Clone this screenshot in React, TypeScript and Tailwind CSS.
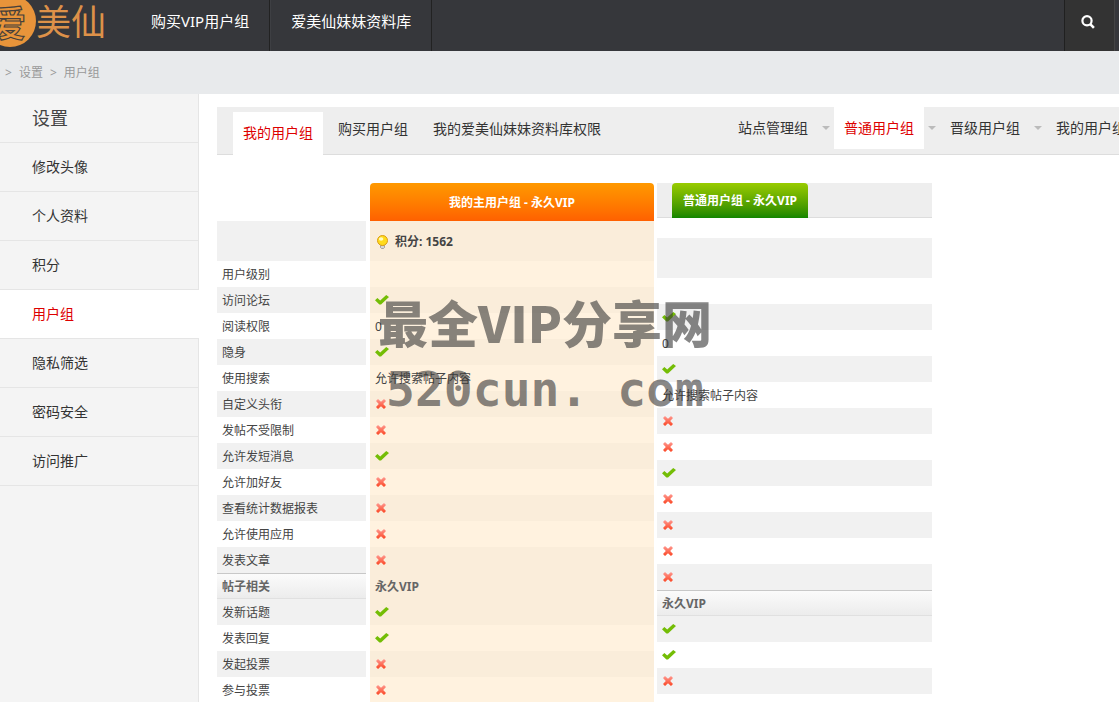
import React from "react";

type Mark = "yes" | "no" | string;

const navItems = ["购买VIP用户组", "爱美仙妹妹资料库"];
const sideItems = ["修改头像", "个人资料", "积分", "用户组", "隐私筛选", "密码安全", "访问推广"];
const groupTabs = ["站点管理组", "普通用户组", "晋级用户组", "我的用户组"];

const rows: { label: string; value: Mark; section?: boolean }[] = [
  { label: "用户级别", value: "" },
  { label: "访问论坛", value: "yes" },
  { label: "阅读权限", value: "0" },
  { label: "隐身", value: "yes" },
  { label: "使用搜索", value: "允许搜索帖子内容" },
  { label: "自定义头衔", value: "no" },
  { label: "发帖不受限制", value: "no" },
  { label: "允许发短消息", value: "yes" },
  { label: "允许加好友", value: "no" },
  { label: "查看统计数据报表", value: "no" },
  { label: "允许使用应用", value: "no" },
  { label: "发表文章", value: "no" },
  { label: "帖子相关", value: "永久VIP", section: true },
  { label: "发新话题", value: "yes" },
  { label: "发表回复", value: "yes" },
  { label: "发起投票", value: "no" },
  { label: "参与投票", value: "no" },
];

function Check() {
  return (
    <svg role="img" aria-label="允许" className="block" width="14" height="10" viewBox="0 0 14 10">
      <path d="M0 5.2 2.4 3 5.2 5.4 11.2 0 14 2 6 9.6H4.4Z" fill="#74bd06" />
    </svg>
  );
}

function Cross() {
  return (
    <svg role="img" aria-label="不允许" className="ml-px block" width="10" height="10" viewBox="0 0 10 10">
      <defs>
        <linearGradient id="crossFill" x1="0" y1="0" x2="0" y2="10" gradientUnits="userSpaceOnUse">
          <stop offset="0" stopColor="#ff9a92" />
          <stop offset="1" stopColor="#fb4522" />
        </linearGradient>
      </defs>
      <path d="M2 0 5 2.8 8 0 10 2 7.2 5 10 8 8 10 5 7.2 2 10 0 8 2.8 5 0 2Z" fill="url(#crossFill)" />
    </svg>
  );
}

function Value({ value }: { value: Mark }) {
  if (value === "yes") return <Check />;
  if (value === "no") return <Cross />;
  return <>{value}</>;
}

function Bulb() {
  return (
    <svg aria-hidden="true" width="13" height="14" viewBox="0 0 13 14">
      <path d="M4.5 10.5h4v2l-1 1h-2l-1-1Z" fill="#d6d6d6" stroke="#888" strokeWidth=".7" />
      <circle cx="6.5" cy="5.5" r="5" fill="#ffdb1c" stroke="#dc9d12" />
      <ellipse cx="5.1" cy="4" rx="2.2" ry="1.8" fill="#fffbc4" />
    </svg>
  );
}

const sectionRow = "border-t border-b border-t-[#c8c8c8] border-b-[#e0e0e0] bg-linear-to-b from-[#fbfbfb] to-[#ececec] font-bold text-[#666]";

export default function App() {
  return (
    <div className="relative flex h-screen flex-col overflow-x-hidden overflow-y-auto bg-white font-['Noto_Sans','Noto_Sans_CJK_SC',sans-serif] text-[#333] [scrollbar-width:none]">
      <header className="flex h-[51px] shrink-0 bg-[#36373b]">
        <a href="#home" aria-label="爱美仙" className="block w-[131px] shrink-0 overflow-hidden">
          <svg width="110" height="51" viewBox="0 0 110 51" className="font-['Noto_Sans_CJK_SC',sans-serif]">
            <circle cx="10" cy="21" r="26" fill="#e8943a" />
            <text x="-10" y="37" fontSize="36" fontWeight="700" fill="#e8943a" stroke="#46403b" strokeWidth="1.2">爱</text>
            <text x="36" y="35" fontSize="35" fontWeight="400" fill="#dd9149">美仙</text>
          </svg>
        </a>
        <nav className="flex grow">
          {navItems.map((item) => (
            <a
              key={item}
              href="#nav"
              className="border-r border-r-[#222] px-5 pt-[9px] text-[15px] leading-6 whitespace-nowrap text-white last:border-l last:border-l-[#3e3f43]"
            >
              {item}
            </a>
          ))}
        </nav>
        <button type="button" aria-label="搜索" className="mr-1 flex w-[51px] justify-center border-r border-l border-r-[#444] border-l-[#202020] bg-[#333] pt-[15px] pr-1">
          <svg width="14" height="14" viewBox="0 0 14 14" fill="none" stroke="#fff">
            <circle cx="6" cy="5.8" r="4.6" strokeWidth="2.2" />
            <path d="m9.3 9.2 3.6 3.6" strokeWidth="2.6" />
          </svg>
        </button>
      </header>

      <nav aria-label="路径" className="flex h-[43px] shrink-0 items-center gap-[7px] bg-[#e8eaec] pl-[5px] text-xs text-[#999]">
        <span>&gt;</span>
        <a href="#settings">设置</a>
        <span>&gt;</span>
        <a href="#groups">用户组</a>
      </nav>

      <div className="flex grow">
        <aside className="w-[199px] shrink-0 border-r border-[#e5e5e5] bg-[#f4f4f4]">
          <h2 className="h-[49px] border-b border-[#e5e5e5] pl-8 text-lg leading-[48px] text-[#444]">设置</h2>
          <ul>
            {sideItems.map((item) => (
              <li key={item}>
                <a
                  href="#side"
                  className={
                    item === "用户组"
                      ? "-mr-px block h-[49px] border-b border-[#e5e5e5] bg-white pl-8 text-sm leading-[48px] text-[#d00]"
                      : "block h-[49px] border-b border-[#e5e5e5] pl-8 text-sm leading-[48px]"
                  }
                >
                  {item}
                </a>
              </li>
            ))}
          </ul>
        </aside>

        <main className="min-w-0 grow overflow-x-clip pt-[13px] pl-[18px]">
          <div className="flex h-12 justify-between border-b border-[#ddd] bg-[#eee] text-sm whitespace-nowrap">
            <ul className="flex pl-4">
              <li className="-mb-px pt-[5px]">
                <a href="#mine" className="block h-[43px] bg-white px-2.5 leading-[42px] text-[#d00]">我的用户组</a>
              </li>
              <li><a href="#buy" className="block pr-2.5 pl-[15px] leading-[44px]">购买用户组</a></li>
              <li><a href="#rights" className="block px-[15px] leading-[44px]">我的爱美仙妹妹资料库权限</a></li>
            </ul>
            <ul className="-mr-[17px] flex">
              {groupTabs.map((tab, i) => (
                <li key={tab} className="flex">
                  <a
                    href="#group"
                    className={i === 1 ? "block h-[42px] bg-white px-2.5 leading-[42px] text-[#d00]" : "block h-[42px] px-2.5 leading-[42px]"}
                  >
                    {tab}
                  </a>
                  {i < 3 && (
                    <svg aria-hidden="true" className="mt-[19px] mr-1 ml-1" width="8" height="4" viewBox="0 0 8 4">
                      <path d="M0 0h8L4 4Z" fill="#bbb" />
                    </svg>
                  )}
                </li>
              ))}
            </ul>
          </div>

          <div className="flex items-start pt-7 text-xs text-[#444]">
            <table className="mt-[38px] w-[149px] table-fixed border-separate border-spacing-0 text-left">
              <tbody>
                <tr className="h-10 bg-[#f1f1f1]"><td /></tr>
                {rows.map((r, i) => (
                  <tr key={r.label} className={i % 2 ? "h-[26px] bg-[#f1f1f1]" : "h-[26px]"}>
                    <th scope="row" className={r.section ? `${sectionRow} p-0 pt-0.5 pl-[5px]` : "p-0 pt-0.5 pl-[5px] font-normal"}>{r.label}</th>
                  </tr>
                ))}
              </tbody>
            </table>

            <table className="ml-1 w-[284px] table-fixed border-separate border-spacing-0 text-left">
              <thead>
                <tr className="h-[38px]">
                  <th className="rounded-t bg-linear-to-b from-[#ff9900] to-[#ff6000] p-0 pt-0.5 text-center font-bold text-white">我的主用户组 - 永久VIP</th>
                </tr>
              </thead>
              <tbody>
                <tr className="h-10 bg-[#faedda]">
                  <td className="p-0 pt-0.5 pl-1.5">
                    <div className="flex items-center gap-1.5 font-bold"><Bulb />积分: 1562</div>
                  </td>
                </tr>
                {rows.map((r, i) => (
                  <tr key={r.label} className={i % 2 || r.section ? "h-[26px] bg-[#faedda]" : "h-[26px] bg-[#fff2df]"}>
                    <td className={r.section ? "p-0 pt-0.5 pl-[5px] font-bold text-[#666]" : r.value.length > 3 || r.value === "0" ? "p-0 pt-0.5 pl-[5px]" : "p-0 pl-[5px]"}><Value value={r.value} /></td>
                  </tr>
                ))}
              </tbody>
            </table>

            <section className="ml-[3px] w-[275px]">
              <h3 className="flex h-[35px] border-b border-[#ddd] bg-[#eee] pl-[15px]">
                <span className="-mb-px h-[35px] rounded-t bg-linear-to-b from-[#9c0] to-[#108600] px-[11px] leading-[35px] font-bold text-white">普通用户组 - 永久VIP</span>
              </h3>
              <table className="mt-5 w-full table-fixed border-separate border-spacing-0 text-left">
                <tbody>
                  <tr className="h-10 bg-[#f1f1f1]"><td /></tr>
                  {rows.map((r, i) => (
                    <tr key={r.label} className={i % 2 ? "h-[26px] bg-[#f1f1f1]" : "h-[26px]"}>
                      <td className={r.section ? `${sectionRow} p-0 pt-0.5 pl-[5px]` : r.value.length > 3 || r.value === "0" ? "p-0 pt-0.5 pl-[5px]" : "p-0 pl-[5px]"}><Value value={r.value} /></td>
                    </tr>
                  ))}
                </tbody>
              </table>
            </section>
          </div>
        </main>
      </div>

      <div className="pointer-events-none absolute top-[287px] left-[375px] w-[340px] text-center leading-[68px] font-black whitespace-nowrap text-[#373737]/60">
        <p className="font-['Noto_Sans_CJK_SC',sans-serif] text-[50px]">最全VIP分享网</p>
        <p className="font-['DejaVu_Sans_Mono',monospace] text-[48px]">520cun. com</p>
      </div>
    </div>
  );
}
